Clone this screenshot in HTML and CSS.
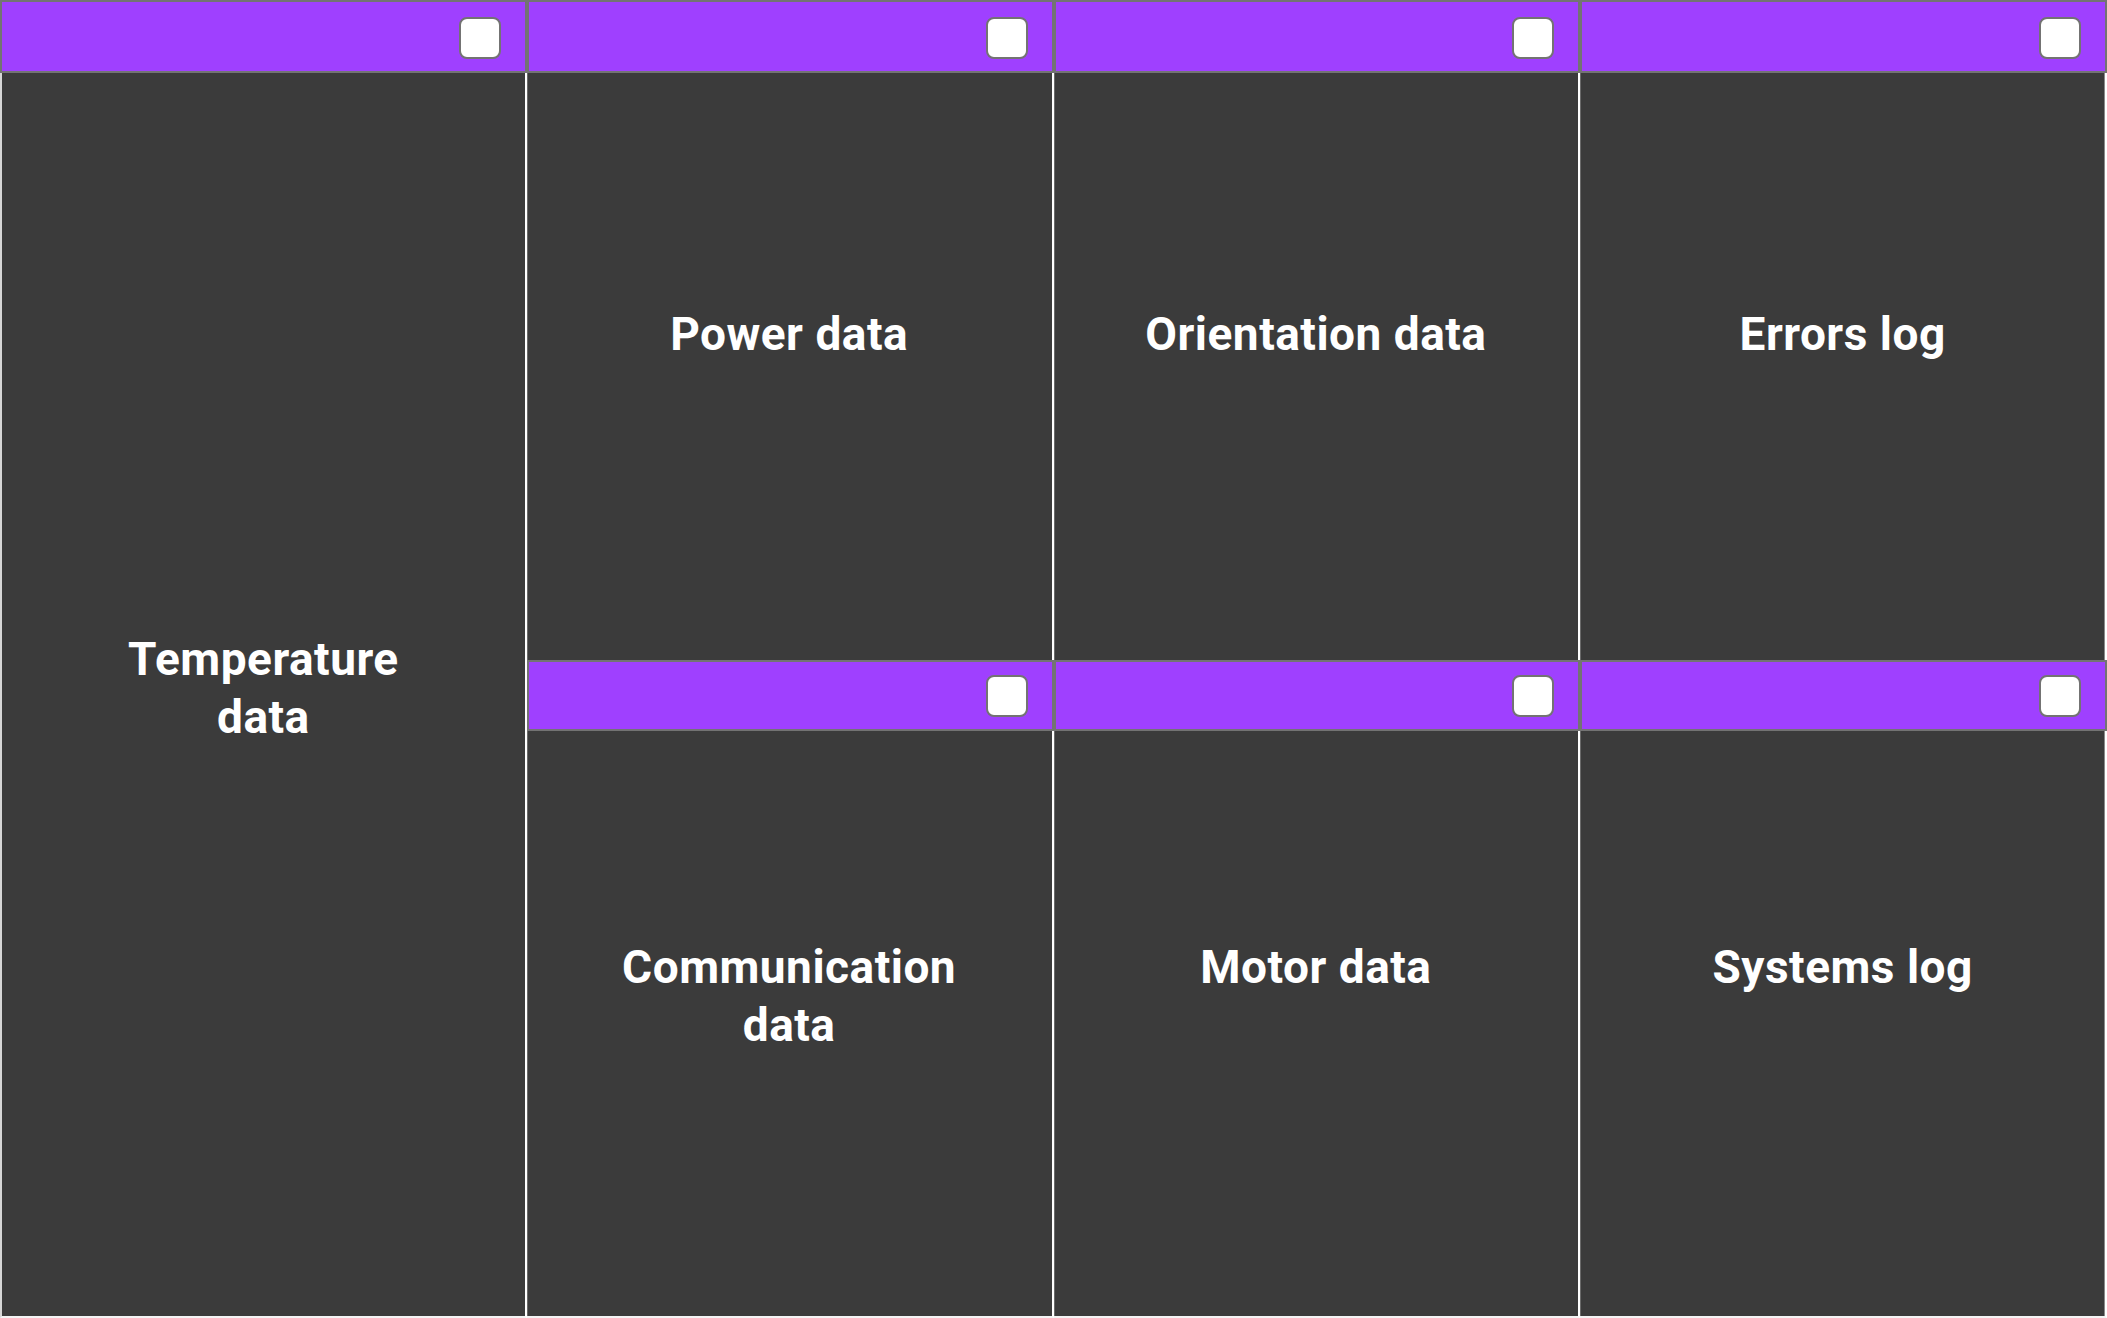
FILE: index.html
```html
<!DOCTYPE html>
<html lang="en">
<head>
<meta charset="utf-8">
<title>Dashboard</title>
<link rel="stylesheet" href="styles.css">
</head>
<body>
<main class="board">
  <section class="panel panel--tall">
    <header class="panel-head"><span class="check"></span></header>
    <div class="panel-body body--tall"><h2 class="label">Temperature<br>data</h2></div>
  </section>
  <section class="panel">
    <header class="panel-head"><span class="check"></span></header>
    <div class="panel-body body--top"><h2 class="label">Power data</h2></div>
  </section>
  <section class="panel">
    <header class="panel-head"><span class="check"></span></header>
    <div class="panel-body body--top"><h2 class="label">Orientation data</h2></div>
  </section>
  <section class="panel panel--last">
    <header class="panel-head"><span class="check"></span></header>
    <div class="panel-body body--top"><h2 class="label">Errors log</h2></div>
  </section>
  <section class="panel panel--bottom">
    <header class="panel-head head--second"><span class="check"></span></header>
    <div class="panel-body body--bottom"><h2 class="label">Communication<br>data</h2></div>
  </section>
  <section class="panel panel--bottom">
    <header class="panel-head head--second"><span class="check"></span></header>
    <div class="panel-body body--bottom"><h2 class="label">Motor data</h2></div>
  </section>
  <section class="panel panel--bottom panel--last">
    <header class="panel-head head--second"><span class="check"></span></header>
    <div class="panel-body body--bottom"><h2 class="label">Systems log</h2></div>
  </section>
</main>
</body>
</html>
```

FILE: styles.css
```css
* { box-sizing: border-box; }

html, body {
  margin: 0;
  padding: 0;
  background: #ffffff;
}

.board {
  width: 2107px;
  height: 1318px;
  display: grid;
  grid-template-columns: repeat(4, 1fr);
  grid-template-rows: 660px 658px;
  background: #ffffff;
  font-family: Roboto, "Liberation Sans", sans-serif;
}

.panel {
  display: flex;
  flex-direction: column;
  min-width: 0;
}

.panel--tall {
  grid-row: 1 / span 2;
}

.panel-head {
  flex: none;
  height: 73px;
  background: #9f40ff;
  border: 2px solid #737373;
  display: flex;
  justify-content: flex-end;
  align-items: center;
  padding-right: 24px;
  padding-top: 2px;
}

.head--second {
  height: 71px;
  padding-top: 1px;
}

.check {
  width: 42px;
  height: 42px;
  background: #ffffff;
  border: 2px solid #737373;
  border-radius: 8px;
}

.panel-body {
  flex: 1;
  background: #3b3b3b;
  border-right: 2px solid #ffffff;
  box-shadow: inset 1px 0 0 #6a6a6a;
  display: flex;
  flex-direction: column;
  align-items: center;
}

.panel--tall .panel-body {
  border-left: 2px solid #d6d6d6;
  border-bottom: 2px solid #f4f4f4;
  box-shadow: none;
}

.panel--bottom .panel-body {
  border-bottom: 2px solid #f4f4f4;
}

.panel--last .panel-body {
  box-shadow: inset 1px 0 0 #6a6a6a, inset -1px 0 0 #8a8a8a;
}

.body--top { padding-top: 232px; }
.body--bottom { padding-top: 207px; }
.body--tall { padding-top: 557px; }

.label {
  margin: 0;
  color: #ffffff;
  font-size: 46px;
  line-height: 58px;
  font-weight: 700;
  letter-spacing: 0.5px;
  text-align: center;
}
```
